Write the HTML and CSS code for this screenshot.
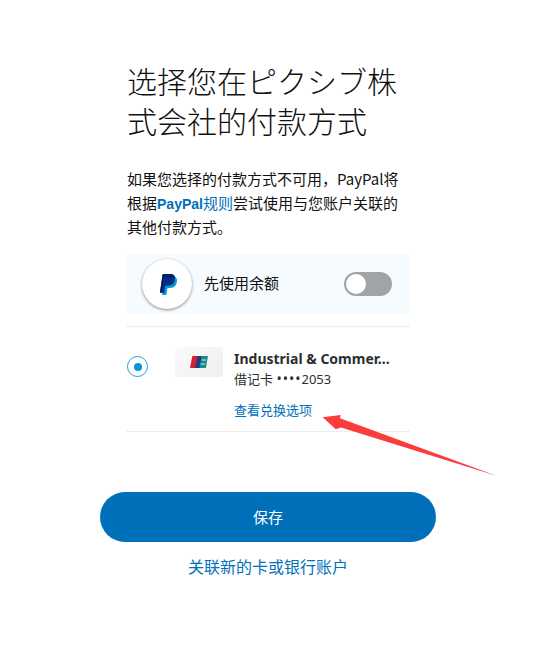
FILE: index.html
```html
<!DOCTYPE html>
<html lang="zh-CN">
<head>
<meta charset="utf-8">
<title>选择付款方式</title>
<link rel="stylesheet" href="styles.css">
</head>
<body>
<main class="page">
  <div class="content">
    <h1 class="title">选择您在ピクシブ株式会社的付款方式</h1>
    <p class="intro">如果您选择的付款方式不可用，PayPal将根据<a class="intro-link" href="#"><b>PayPal</b>规则</a>尝试使用与您账户关联的其他付款方式。</p>
    <section class="balance">
      <span class="pp-circle">
        <svg class="pp-icon" viewBox="1.800 0 21 24" width="17" height="21" preserveAspectRatio="none">
          <path fill="#009cde" transform="translate(2.600 2.600)" d="M7.076 21.337H2.470a.641.641 0 0 1-.633-.74L4.944.901C5.026.382 5.474 0 5.998 0h7.460c2.570 0 4.578.543 5.690 1.810 1.010 1.150 1.304 2.420 1.012 4.287-.023.143-.047.288-.077.437-.983 5.050-4.349 6.797-8.647 6.797h-2.190c-.524 0-.968.382-1.050.900l-1.120 7.106z"/>
          <path fill="#012f86" d="M7.076 21.337H2.470a.641.641 0 0 1-.633-.74L4.944.901C5.026.382 5.474 0 5.998 0h7.460c2.570 0 4.578.543 5.690 1.810 1.010 1.150 1.304 2.420 1.012 4.287-.023.143-.047.288-.077.437-.983 5.050-4.349 6.797-8.647 6.797h-2.190c-.524 0-.968.382-1.050.900l-1.120 7.106z"/>
          <path fill="#012169" d="M6 0h7.500c2.600 0 4.600.5 5.700 1.800.8 1 1.200 2 1 3.400-2.500-1.100-4.500-1.200-7-1.200H7.500c-.5 0-.9.300-1 .8L4.300 21.300H2.500c-.4 0-.7-.3-.6-.7L4.900.9C5 .4 5.500 0 6 0z"/>
        </svg>
      </span>
      <span class="balance-label">先使用余额</span>
      <span class="switch"><span class="knob"></span></span>
    </section>
    <section class="method">
      <span class="radio"><span class="radio-dot"></span></span>
      <span class="card-art">
        <svg viewBox="0 0 18 12" width="18" height="12">
          <path fill="#d7202f" d="M3 0H8.500L6.500 12H.5c-.3 0-.5-.2-.4-.5L2.200.6C2.300.2 2.600 0 3 0z"/>
          <path fill="#1d3f7c" d="M7.500 0h5l-2.500 12H5z"/>
          <path fill="#158c8c" d="M11.500 0h6c.3 0 .5.200.4.500L16 11.500c0 .3-.2.500-.5.500H9.500z"/>
          <path fill="#d8eeee" d="M12 3.500h4l-.2 1h-4zM11 7.500h4.200l-.2 1h-4.200z"/>
        </svg>
      </span>
      <div class="method-info">
        <div class="bank">Industrial &amp; Commer...</div>
        <div class="card-no">借记卡 <span class="dots">••••</span>2053</div>
        <a class="exchange" href="#">查看兑换选项</a>
      </div>
    </section>
  </div>
  <button class="save" type="button">保存</button>
  <a class="link-new" href="#">关联新的卡或银行账户</a>
</main>
<svg class="arrow" viewBox="0 0 551 662" width="551" height="662">
  <path fill="#fb3c3c" d="M322.700 417.300 340.700 415 340 418.300 497 476 341 427.500 335.700 429.300z"/>
</svg>
</body>
</html>
```
FILE: styles.css
```css
* { box-sizing: border-box; }
html, body { margin: 0; padding: 0; background: #fff; }
body {
  width: 551px;
  height: 662px;
  overflow: hidden;
  position: relative;
  font-family: "Noto Sans CJK SC", "Liberation Sans", sans-serif;
  color: #111;
}
a { text-decoration: none; }
.page {
  padding: 60px 115px 0 100px;
  display: flex;
  flex-direction: column;
  align-items: center;
}
.content { width: 282px; align-self: flex-start; margin-left: 27px; }
.title {
  margin: 0;
  font-size: 30px;
  line-height: 40px;
  font-weight: 300;
  color: #111;
}
.intro {
  margin: 27px 0 0;
  font-size: 15px;
  line-height: 24px;
  font-weight: 400;
  color: #111;
}
.intro-link { color: #0070ba; }
.intro-link b { font-family: "Liberation Sans", sans-serif; font-size: 14px; line-height: 16px; font-weight: 700; }
.balance {
  margin-top: 15px;
  height: 60px;
  background: #f5fbff;
  display: flex;
  align-items: center;
  padding: 0 17px 0 15px;
}
.pp-circle {
  width: 50px;
  height: 50px;
  border-radius: 50%;
  background: #fff;
  box-shadow: 0 1px 3px rgba(0,0,0,.45);
  display: flex;
  align-items: center;
  justify-content: center;
  padding-left: 3px;
}
.balance-label { margin: 0 0 2px 12px; font-size: 15px; line-height: 20px; flex: 1; color: #111; }
.switch {
  width: 48px;
  height: 24px;
  border-radius: 12px;
  background: #a1a4a6;
  padding: 2px;
}
.knob { display: block; width: 20px; height: 20px; border-radius: 50%; background: #fff; }
.method {
  margin-top: 12px;
  height: 106px;
  border-top: 1px dotted #ddd;
  border-bottom: 1px dotted #ddd;
  display: flex;
  align-items: flex-start;
  padding-top: 20px;
}
.radio {
  margin-top: 9px;
  width: 21px;
  height: 21px;
  border-radius: 50%;
  border: 1.500px solid #1a9fdc;
  display: flex;
  align-items: center;
  justify-content: center;
  flex: none;
}
.radio-dot { width: 8px; height: 8px; border-radius: 50%; background: #0d94d8; }
.card-art {
  margin-left: 27px;
  width: 48px;
  height: 30px;
  border-radius: 3px;
  background: linear-gradient(135deg, #fafafa, #efefef);
  display: flex;
  align-items: center;
  justify-content: center;
  flex: none;
}
.method-info { margin-left: 11px; margin-top: 1px; }
.bank {
  font-family: "Noto Sans", sans-serif;
  font-size: 14px;
  line-height: 21px;
  font-weight: 700;
  color: #2c2e2f;
  white-space: nowrap;
}
.card-no {
  font-family: "Noto Sans", "Noto Sans CJK SC", sans-serif;
  font-size: 13px;
  line-height: 20px;
  color: #2c2e2f;
}
.dots { font-size: 14px; line-height: 16px; letter-spacing: 1px; }
.exchange {
  display: block;
  margin-top: 11px;
  font-size: 13px;
  line-height: 20px;
  color: #0070ba;
}
.save {
  margin-top: 60px;
  width: 336px;
  height: 50px;
  padding: 0 0 2px;
  border: 0;
  border-radius: 25px;
  background: #0070ba;
  color: #fff;
  font-family: inherit;
  font-size: 15px;
  align-self: flex-start;
}
.link-new {
  margin-top: 12px;
  width: 336px;
  align-self: flex-start;
  text-align: center;
  font-size: 16px;
  line-height: 24px;
  color: #0070ba;
}
.arrow { position: absolute; left: 0; top: 0; pointer-events: none; }
```
